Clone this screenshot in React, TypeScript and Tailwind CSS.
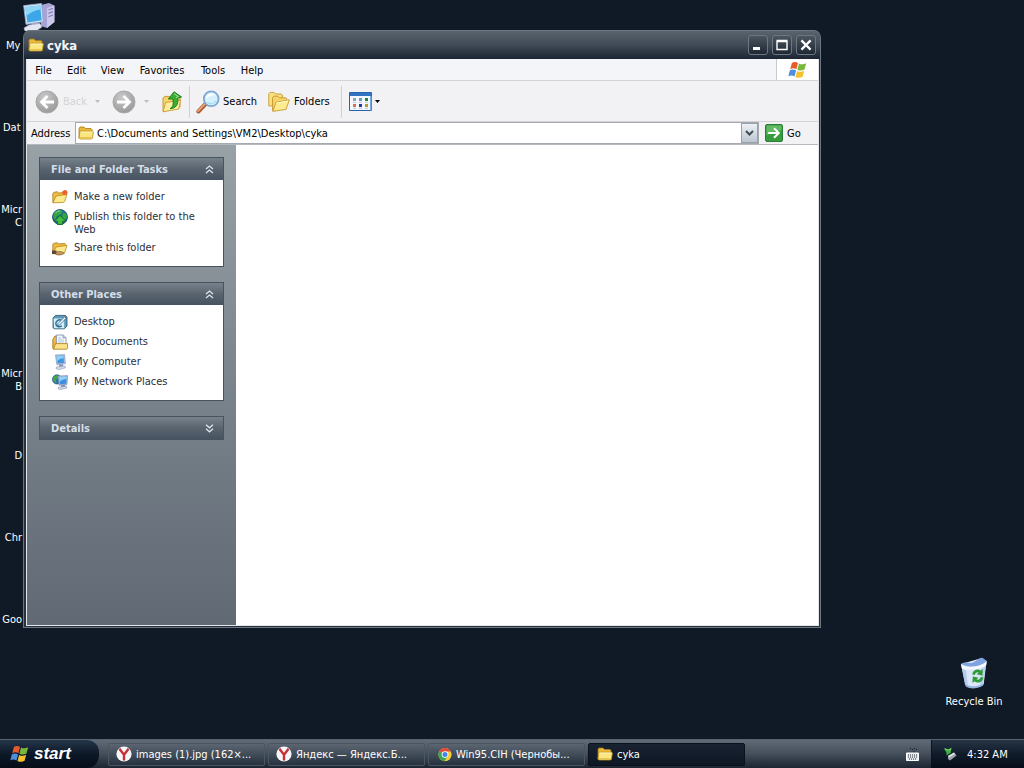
import React from 'react';

interface IconProps {
  className?: string;
}

interface DesktopShortcut {
  lines: string[];
  align: string;
}

interface TaskLink {
  label: string;
  icon: React.ReactNode;
}

const FolderIcon: React.FC<IconProps> = ({ className = 'w-4 h-4' }) => (
  <svg viewBox="0 0 16 16" className={className} aria-hidden="true">
    <path d="M1 13V3.5L2 2h4l1.5 1.5H13l1 1V7H4z" fill="#e9b93a" stroke="#a87a16" strokeWidth=".8" />
    <path d="M2 6.2h12.6l.8.8-1 6.2-.8.8H1.8l-.8-.8z" fill="#fbe681" stroke="#b98a1c" strokeWidth=".8" />
    <path d="M2.4 7h12" stroke="#fffac8" strokeWidth=".9" />
    <path d="M2 12.6h11.4" stroke="#e8c23f" strokeWidth="1" />
  </svg>
);

const OpenFolderIcon: React.FC<IconProps & { badge?: 'new' | 'share' }> = ({ className = 'w-4 h-4', badge }) => (
  <svg viewBox="0 0 16 16" className={className} aria-hidden="true">
    <path d="M.8 13.5V4.5l1-1.2 3.6-.5 1.4 1.2 6-.6.8 1V8z" fill="#eebc45" stroke="#a8771a" strokeWidth=".8" />
    <path d="M1 13.8 4 7l11-1.6-2.4 7.2-1 .8z" fill="#fde98e" stroke="#b98920" strokeWidth=".8" />
    {badge === 'new' && <path d="m12.4 1 2.4.4.8 2.2-1 2-2.4.6-1.8-1.4-.2-2.2z" fill="#e8622f" />}
    {badge === 'share' && (
      <g>
        <path d="M0 10.5h4.5V14H0z" fill="#5c4636" />
        <path d="M4 12.2c3-1.2 5-.6 7.4.2l1 .8c-2 2-6 2.2-8.6 1.2z" fill="#c89a5c" stroke="#6d4f2a" strokeWidth=".6" />
      </g>
    )}
  </svg>
);

const WindowsFlag: React.FC<IconProps> = ({ className }) => (
  <svg viewBox="0 0 20 18" className={className} aria-hidden="true">
    <path d="M3.9 2C6 .5 8 .6 10 1.9L8.4 8.3C6.4 7 4.4 7 2.2 8.2z" fill="#e8592b" />
    <path d="M11 2.4c2.2 1.3 4.5 1.2 7.2-.2l-1.7 6.3c-2.4 1.3-4.8 1.4-7.1.2z" fill="#7ab83c" />
    <path d="M1.9 9.3c2.3-1.2 4.2-1.1 6.2.1l-1.6 6C4.4 14.2 2.6 14.3.3 15.3z" fill="#4d8fdd" />
    <path d="M9.1 9.9c2.3 1.2 4.6 1.1 7.1-.2l-1.6 6.1c-2.6 1.3-4.9 1.3-7.1.1z" fill="#f5c12e" />
  </svg>
);

const NavArrow: React.FC<{ forward?: boolean }> = ({ forward }) => (
  <svg viewBox="0 0 24 24" className="h-6 w-6 shrink-0" aria-hidden="true">
    <defs>
      <radialGradient id={forward ? 'navForward' : 'navBack'} cx=".4" cy=".3" r=".8">
        <stop offset="0" stopColor="#cacaca" />
        <stop offset="1" stopColor="#949494" />
      </radialGradient>
    </defs>
    <circle cx="12" cy="12" r="11" fill={forward ? 'url(#navForward)' : 'url(#navBack)'} stroke="#a9a9a9" />
    <path
      d={forward ? 'M5 12h12M11.5 6l6 6-6 6' : 'M19 12H7M12.5 6l-6 6 6 6'}
      fill="none"
      stroke="#fff"
      strokeWidth="2.8"
    />
  </svg>
);

const Caret: React.FC<IconProps> = ({ className = '' }) => (
  <svg viewBox="0 0 5 3" className={`h-[3px] w-[5px] shrink-0 ${className}`} aria-hidden="true">
    <path d="M0 0h5L2.5 3z" fill="currentColor" />
  </svg>
);

const UpFolderIcon: React.FC = () => (
  <svg viewBox="0 0 22 24" className="h-6 w-[22px]" aria-hidden="true">
    <path d="M2 21V8l2-1.6h4L10 8l7-1.4 2 1V17z" fill="#f5d56a" stroke="#c99a32" />
    <path d="M2 21.8 4.6 12.6 19.6 10l-1.8 9z" fill="#fdeea0" stroke="#cda23a" />
    <path
      d="M9 18.6c3-1.4 3.6-4 3-9.6H7.4L13 1.8 20.6 7l-3.8 1c.8 6.6-2 10.6-7.8 10.6z"
      fill="#3aae37"
      stroke="#17761b"
      strokeWidth=".9"
    />
    <path d="m13 3.6 4.4 3-2.4 1" fill="none" stroke="#a5e491" strokeWidth="1" />
  </svg>
);

const SearchIcon: React.FC = () => (
  <svg viewBox="0 0 24 24" className="h-6 w-6" aria-hidden="true">
    <path d="m10 13.5-7.6 8" stroke="#a75c32" strokeWidth="4" strokeLinecap="round" />
    <path d="m9.4 13.4-7.4 7.8" stroke="#eda572" strokeWidth="1.8" strokeLinecap="round" />
    <circle cx="15.2" cy="8.8" r="7.4" fill="#d6f1fc" stroke="#7ea7d4" strokeWidth="1.8" />
    <path d="M10.2 8.6c.2-3 2.4-5 5.4-5 2 0 3.3.8 4 1.8-3.6-.8-6.6.4-9.4 3.2z" fill="#fff" />
    <path d="M11.4 12.2c2.6 2.4 6.4 1.8 8.4-1.4" fill="none" stroke="#a9dcf5" strokeWidth="1.4" />
  </svg>
);

const FoldersIcon: React.FC = () => (
  <svg viewBox="0 0 22 22" className="h-[22px] w-[22px]" aria-hidden="true">
    <path d="M.8 15V2.6L2 1.4h4L7.4 3H13l1.4 1v10.4z" fill="#f9e07f" stroke="#cda33c" />
    <path d="M4.6 19.4V6.6l1.2-1.4h4l1.6 1.6h6.4l1 1v4z" fill="#f6d66c" stroke="#c79a32" />
    <path d="M4.8 20.4 8 11.2l13.4-2.4-3.4 9.6z" fill="#fdeb90" stroke="#cea238" />
    <path d="M8.6 12 20 10" stroke="#fffbd2" />
  </svg>
);

const ViewsIcon: React.FC = () => (
  <svg viewBox="0 0 23 19" className="h-[19px] w-[23px]" aria-hidden="true">
    <path d="M.5.5h22v18H.5z" fill="#f4f8fc" stroke="#2862a8" />
    <path d="M1 1h21v3H1z" fill="#3373c4" />
    <path d="M21 4h1.5v14.5H21z" fill="#78aae0" />
    <path d="M4 6h3v3H4z" fill="#93a5b8" />
    <path d="M10 6h3v3h-3z" fill="#6d99bd" />
    <path d="M16 6h3v3h-3z" fill="#22863c" />
    <path d="M4 12h3v3H4z" fill="#db7244" />
    <path d="M10 12h3v3h-3z" fill="#1c3fa8" />
    <path d="M16 12h3v3h-3z" fill="#b89a2c" />
    <path d="M4 10.4h3M10 10.4h3M16 10.4h3M4 16.4h3M10 16.4h3M16 16.4h3" stroke="#b4bcc6" strokeWidth=".8" />
  </svg>
);

const GoIcon: React.FC = () => (
  <svg viewBox="0 0 18 18" className="h-[18px] w-[18px]" aria-hidden="true">
    <rect x=".5" y=".5" width="17" height="17" rx="1.5" fill="#379c3c" stroke="#2a7d34" />
    <path d="M1.5 1.5h15v5c-6 0-10 2-15 5z" fill="#61b964" />
    <path d="M3.2 9h10.4M9 4.2 13.8 9 9 13.8" fill="none" stroke="#fff" strokeWidth="2" />
  </svg>
);

const GlobeIcon: React.FC = () => (
  <svg viewBox="0 0 16 16" className="h-4 w-4" aria-hidden="true">
    <circle cx="8" cy="8" r="7.5" fill="#1f67a8" stroke="#17486f" strokeWidth=".8" />
    <path d="M2 4.4C4.6.8 9 .4 10.6 2L9 5.6 5 7 3 11C1 9 1 6.6 2 4.4zM11 3.4l3.4 1.4.6 4-3 2.6-2-4z" fill="#35a53e" />
    <path d="m8 6.4 6 6h-3.4v3H5.4v-3H2z" fill="#42bb3f" stroke="#12601d" strokeWidth=".8" />
    <path d="M3.4 4.2C4.6 2.4 6.6 1.8 8 2" fill="none" stroke="#a3dcc4" strokeWidth=".9" />
  </svg>
);

const DesktopIcon: React.FC = () => (
  <svg viewBox="0 0 16 16" className="h-4 w-4" aria-hidden="true">
    <path d="M1 4 3.4 1.4h10L15 3v9l-2.6 2.8H2L1 13.4z" fill="#5c9ab8" stroke="#1d526f" strokeWidth=".8" />
    <path d="M1.6 4.4h10.6v9.8H2z" fill="#d4eef8" />
    <path d="M9.6 6.2C7 4.8 3.8 6.8 3.8 9.6c0 3 3.4 4 6 2.2" fill="none" stroke="#286f95" strokeWidth="1.4" />
    <path d="m6 9.6 6.8-7 1.6 1.4-6.8 7-2.2.6z" fill="#f2fbff" stroke="#275f83" strokeWidth=".8" />
    <path d="m12.6 2.6 1.6 1.4" stroke="#cc4d36" strokeWidth="1" />
  </svg>
);

const DocumentsIcon: React.FC = () => (
  <svg viewBox="0 0 16 16" className="h-4 w-4" aria-hidden="true">
    <path d="M.8 14.4V5.4L3 2h2.4v12.8H1.4z" fill="#ecb944" stroke="#9e7018" strokeWidth=".8" />
    <path d="M4.4 1h6.8L14 3.6V12H4.4z" fill="#f4f9fe" stroke="#7c8ba4" strokeWidth=".8" />
    <path d="M11 1v2.8h3" fill="#c8dcf1" stroke="#7c8ba4" strokeWidth=".8" />
    <path d="M6 4h3.4M6 6h6M6 8h6" stroke="#9cb6d6" strokeWidth=".8" />
    <path d="M3.6 9.6h12v4.8l-.8.8H1.4z" fill="#fbe28a" stroke="#aa7b1c" strokeWidth=".8" />
  </svg>
);

const ComputerIcon: React.FC = () => (
  <svg viewBox="0 0 16 16" className="h-4 w-4" aria-hidden="true">
    <path d="m3.4 1 9.2-.4.8 9.2-8.6.8z" fill="#a9bcda" stroke="#8094b8" strokeWidth=".6" />
    <path d="m4.4 2 7-.3.6 7-6.4.6z" fill="#3e97e2" />
    <path d="m4.4 2 7-.3.2 2.6c-3 0-5 1.4-6.8 3z" fill="#8bd0f7" />
    <path d="m7 10.6 3.8-.4.6 2.2-4.4.6z" fill="#8795b6" />
    <path d="m4.4 13 8.4-1 .8 1.8-6.4 1.8-3-.8z" fill="#d4daea" stroke="#8c99b6" strokeWidth=".6" />
  </svg>
);

const NetworkIcon: React.FC = () => (
  <svg viewBox="0 0 16 16" className="h-4 w-4" aria-hidden="true">
    <circle cx="5" cy="5.4" r="4.6" fill="#2b72ba" stroke="#194978" strokeWidth=".6" />
    <path d="M1 4.4C2 1.8 4.6.8 6.8 1.4L6 4.4 3.6 5.6 4.4 9C2 8.6.6 6.4 1 4.4z" fill="#45aa3d" />
    <path d="m6 2 9.6-.4-.6 9-8 .6z" fill="#a9bcda" stroke="#7086b2" strokeWidth=".6" />
    <path d="m7 3 7.6-.3-.5 7-6.2.5z" fill="#3e8fdd" />
    <path d="m7 3 7.6-.3-.1 2.4c-3 0-5 1-7 2.8z" fill="#8fd4f8" />
    <path d="m9 11.2 4-.4.4 1.8-4 .6z" fill="#7887ad" />
    <path d="m6.4 13.2 7.8-.9.8 1.5-6.4 1.8-2.4-.8z" fill="#d4daea" stroke="#8390b0" strokeWidth=".6" />
  </svg>
);

const MyComputerLarge: React.FC = () => (
  <svg viewBox="0 0 32 28" className="h-7 w-8" aria-hidden="true">
    <path d="m18 2 8-2 5.4 2.4V19L24 25l-6-2z" fill="#a7a3d4" />
    <path d="m24 5 7.4-2.6V19L24 25z" fill="#cbc8ec" />
    <path d="m25.4 7 4.6-1.8M25.4 10.4 30 8.6M25.4 13.8 30 12" stroke="#8680b8" strokeWidth="1.2" />
    <path d="M.6 2.6 18.6.4l1.6 18.4L3 21.4z" fill="#d0e2f5" stroke="#8aa7ce" strokeWidth=".8" />
    <path d="m2.4 4.2 14.8-1.8L18.6 17.2 4.4 19.4z" fill="#3da6e8" />
    <path d="m2.4 4.2 14.8-1.8.4 4C12 7 7 9.4 3.4 13z" fill="#8cd6f8" />
    <path d="m9 20 6-1 1.6 4H8z" fill="#a5a9c8" />
    <path d="m1 25 5-3 11-1.6L19 24l-6 4H2z" fill="#e4e6f2" stroke="#a5abc9" strokeWidth=".7" />
  </svg>
);

const RecycleBinIcon: React.FC = () => (
  <svg viewBox="0 0 30 32" className="h-8 w-[30px]" aria-hidden="true">
    <path d="M2 7 23 1l4.6 3-3 23.6c-4 3.6-12 4.4-18 1z" fill="#dbe7f8" />
    <path d="M2 7c5-3 8 0 12-1.6 4-1.8 6-4.8 9.4-4.6l4.4 3.4C24 9 11 12 2 7z" fill="#7fa4e0" />
    <path d="M2 7c5 4.4 18 4 25.8-2.8l-.6 4C20 12.8 8 14 2.8 11.4z" fill="#f5f9ff" />
    <path d="m3 12 3 15.6 3 1.6-2-16z" fill="#b5cbee" />
    <path d="m22 12 4.6-2.6L24.4 27l-3.6 2z" fill="#bcd0ef" />
    <path d="M7 27.6c5 2.4 12 2.6 17-1v2c-5 3.6-13 3.6-17.4.6z" fill="#97b3e0" />
    <path d="M14.4 17.6c1-3.6 4.6-4.6 7-2.6" fill="none" stroke="#2c9a35" strokeWidth="2.8" />
    <path d="m23.8 12-.4 6.4-5.8-1.2z" fill="#2c9a35" />
    <path d="M23.2 20.4c-1 3.6-4.6 4.6-7 2.8" fill="none" stroke="#2c9a35" strokeWidth="2.8" />
    <path d="m13.4 26 .4-6.6 5.8 1.4z" fill="#2c9a35" />
  </svg>
);

const YandexIcon: React.FC = () => (
  <svg viewBox="0 0 16 16" className="h-4 w-4 shrink-0" aria-hidden="true">
    <circle cx="8" cy="8" r="7.6" fill="#f6f6f8" />
    <path d="m3.4 2.8 4.6 6 4.6-6M8 8v6.6" fill="none" stroke="#c9313a" strokeWidth="2.4" />
  </svg>
);

const ChromeIcon: React.FC = () => (
  <svg viewBox="0 0 16 16" className="h-4 w-4 shrink-0" aria-hidden="true">
    <circle cx="9" cy="8.6" r="6.6" fill="#f7ca3d" />
    <path d="M9 8.6 3.3 5.2A6.6 6.6 0 0 1 14.8 5.4H9z" fill="#e04a3c" />
    <path d="M9 8.6 3.3 5.2A6.6 6.6 0 0 0 8.4 15.2L11.8 10z" fill="#3fa556" />
    <circle cx="9" cy="8.6" r="3.3" fill="#fff" />
    <circle cx="9" cy="8.6" r="2.5" fill="#4284ee" />
  </svg>
);

const KeyboardIcon: React.FC = () => (
  <svg viewBox="0 0 13 13" className="h-[13px] w-[13px]" aria-hidden="true">
    <path d="M4 .5h1M6 1.5h1M8 .5h1M10 1.5h1M8 3v2" stroke="#141c27" />
    <path d="M.5 5h12v7.5H.5z" fill="#e8ebee" stroke="#fff" />
    <path d="M2 7h9M2 9h9M3 11h7" stroke="#232c38" strokeDasharray="1 1" />
  </svg>
);

const SafelyRemoveIcon: React.FC = () => (
  <svg viewBox="0 0 14 14" className="h-[14px] w-[14px]" aria-hidden="true">
    <path d="m5 9 6-3.4 2.6 3L7 13.4 5 12z" fill="#9ba2a8" />
    <path d="m5 9 6-3.4 1 1.4-6 3.6z" fill="#dfe3e6" />
    <path d="M.6 1 5 2.4 8.6.6 7.8 5.8 3.6 8.6 3.4 5.4z" fill="#3fae3c" />
    <path d="m2 1.8 3.2 1.4L8 2" fill="none" stroke="#8fe07f" strokeWidth=".9" />
  </svg>
);

const Chevrons: React.FC<{ down?: boolean }> = ({ down }) => (
  <svg viewBox="0 0 9 9" className="h-[9px] w-[9px]" aria-hidden="true">
    <path
      d={down ? 'm1 .8 3.5 3L8 .8M1 4.8l3.5 3 3.5-3' : 'm1 4 3.5-3L8 4M1 8l3.5-3L8 8'}
      fill="none"
      stroke="#dce4ed"
      strokeWidth="1.3"
    />
  </svg>
);

const shortcuts: DesktopShortcut[] = [
  { lines: ['My'], align: 'items-start pl-[6px]' },
  { lines: ['Dat'], align: 'items-start pl-[3px]' },
  { lines: ['Micr', 'C'], align: 'items-end' },
  { lines: [], align: '' },
  { lines: ['Micr', 'B'], align: 'items-end' },
  { lines: ['D'], align: 'items-end' },
  { lines: ['Chr'], align: 'items-end' },
  { lines: ['Goo'], align: 'items-end' },
];

const menus = [
  { label: 'File', width: 'w-[33px]' },
  { label: 'Edit', width: 'w-[33px]' },
  { label: 'View', width: 'w-[39px]' },
  { label: 'Favorites', width: 'w-[60px]' },
  { label: 'Tools', width: 'w-[42px]' },
  { label: 'Help', width: 'w-[36px]' },
];

const folderTasks: TaskLink[] = [
  { label: 'Make a new folder', icon: <OpenFolderIcon badge="new" /> },
  { label: 'Publish this folder to the Web', icon: <GlobeIcon /> },
  { label: 'Share this folder', icon: <OpenFolderIcon badge="share" /> },
];

const otherPlaces: TaskLink[] = [
  { label: 'Desktop', icon: <DesktopIcon /> },
  { label: 'My Documents', icon: <DocumentsIcon /> },
  { label: 'My Computer', icon: <ComputerIcon /> },
  { label: 'My Network Places', icon: <NetworkIcon /> },
];

const taskButtons = [
  { label: 'images (1).jpg (162×...', icon: <YandexIcon /> },
  { label: 'Яндекс — Яндекс.Б...', icon: <YandexIcon /> },
  { label: 'Win95.CIH (Чернобы...', icon: <ChromeIcon /> },
];

const TaskPanel: React.FC<{ title: string; links?: TaskLink[] }> = ({ title, links }) => (
  <section className="border border-[#485360]">
    <button className="flex h-[22px] w-full items-center justify-between bg-linear-to-b from-[#78828d] via-[#59646f] to-[#485362] pt-px pr-[9px] pl-[11px] text-[11px] font-bold text-[#d5dde8]">
      {title}
      <Chevrons down={!links} />
    </button>
    {links && (
      <ul className="flex flex-col gap-1 bg-white px-3 pt-[9px] pb-[10px]">
        {links.map((link) => (
          <li key={link.label}>
            <a href="#" className="flex min-h-4 gap-[6px] text-[#2b2e38]">
              <span className="h-4 w-4 shrink-0">{link.icon}</span>
              <span className="w-[130px] pt-px leading-[13px]">{link.label}</span>
            </a>
          </li>
        ))}
      </ul>
    )}
  </section>
);

const TitleBar: React.FC = () => {
  const buttonClass =
    'flex h-5 w-5 items-center justify-center rounded-[3px] border border-[#6d7781] bg-linear-to-b from-[#4c5661] to-[#1f2935]';

  return (
    <header className="flex h-[29px] items-center rounded-t-md border-t border-[#6c7580] bg-linear-to-b from-[#59636d] via-[#414b57] to-[#1b2533] px-1">
      <FolderIcon className="h-4 w-4" />
      <h1 className="ml-[3px] flex-1 pt-px text-[13px] font-bold text-[#f0f6ff]">cyka</h1>
      <div className="flex gap-1">
        <button className={buttonClass} aria-label="Minimize">
          <svg viewBox="0 0 12 12" className="h-3 w-3"><path d="M1 8h7v3H1z" fill="#fff" /></svg>
        </button>
        <button className={buttonClass} aria-label="Maximize">
          <svg viewBox="0 0 12 12" className="h-3 w-3"><path d="M1 2.5h10v8H1zM.5 1.5h11" fill="none" stroke="#fff" strokeWidth="1.4" /></svg>
        </button>
        <button className={buttonClass} aria-label="Close">
          <svg viewBox="0 0 12 12" className="h-3 w-3"><path d="m1.4 1.4 9.2 9.2m0-9.2-9.2 9.2" stroke="#fff" strokeWidth="2.2" /></svg>
        </button>
      </div>
    </header>
  );
};

const ExplorerWindow: React.FC = () => (
  <main className="absolute top-[30px] left-[23px] flex h-[598px] w-[798px] flex-col rounded-t-lg border-x border-b border-[#6c7580] bg-[#28323e]">
    <TitleBar />
    <div className="mr-px mb-px ml-[2px] flex flex-1 flex-col border border-t-0 border-[#e4e7ea] bg-[#f2f2f5]">
      <nav className="flex h-[22px] border-b border-[#d3d3d8]">
        <div className="flex flex-1 items-center border-r border-[#c9c9ce] bg-[#f4f5f9] pt-px">
          {menus.map((menu) => (
            <button key={menu.label} className={`${menu.width} shrink-0 text-center`}>
              {menu.label}
            </button>
          ))}
        </div>
        <div className="flex w-[41px] items-center justify-center bg-white">
          <WindowsFlag className="h-[18px] w-5" />
        </div>
      </nav>

      <div className="flex h-[41px] items-center border-b border-[#d3d3d8] pt-px pl-2">
        <button className="flex items-center gap-1 text-[#d2d2d6]" disabled>
          <NavArrow />
          <span className="w-7 text-left">Back</span>
          <Caret className="text-[#bcbcc0]" />
        </button>
        <button className="ml-3 flex items-center gap-2 text-[#bcbcc0]" aria-label="Forward" disabled>
          <NavArrow forward />
          <Caret />
        </button>
        <button className="ml-3" aria-label="Up">
          <UpFolderIcon />
        </button>
        <span className="mx-[6px] h-8 w-px bg-[#cfcfd4]" />
        <button className="flex w-[66px] items-center gap-[3px]">
          <SearchIcon />
          Search
        </button>
        <button className="ml-[6px] flex w-[66px] items-center gap-1">
          <FoldersIcon />
          Folders
        </button>
        <span className="mx-[7px] h-8 w-px bg-[#cfcfd4]" />
        <button className="flex items-center gap-[3px]" aria-label="Views">
          <ViewsIcon />
          <Caret />
        </button>
      </div>

      <form className="flex h-[23px] items-center border-b border-[#b5b8bd] pl-1" onSubmit={(e) => e.preventDefault()}>
        <label htmlFor="address" className="w-11 whitespace-nowrap">Address</label>
        <div className="flex h-[22px] flex-1 items-center border border-[#a5a9b0] bg-white pl-[2px]">
          <FolderIcon className="h-4 w-4 shrink-0" />
          <input
            id="address"
            type="text"
            defaultValue="C:\Documents and Settings\VM2\Desktop\cyka"
            className="h-5 min-w-0 flex-1 bg-transparent pt-px pl-[3px] outline-none"
          />
          <button
            type="button"
            aria-label="Address history"
            className="flex h-5 w-[17px] items-center justify-center border border-[#98a2af] bg-linear-to-b from-[#eef1f5] to-[#bcc5d0]"
          >
            <svg viewBox="0 0 9 6" className="h-[6px] w-[9px]">
              <path d="m1 1 3.5 3.5L8 1" fill="none" stroke="#414b57" strokeWidth="2" />
            </svg>
          </button>
        </div>
        <button className="ml-[6px] flex w-[53px] items-center gap-1">
          <GoIcon />
          Go
        </button>
      </form>

      <div className="flex flex-1 bg-white">
        <aside className="flex w-[209px] flex-col gap-[15px] bg-linear-to-b from-[#98a1a5] via-[#7a848c] to-[#606974] px-3 pt-3">
          <TaskPanel title="File and Folder Tasks" links={folderTasks} />
          <TaskPanel title="Other Places" links={otherPlaces} />
          <TaskPanel title="Details" />
        </aside>
      </div>
    </div>
  </main>
);

const Taskbar: React.FC = () => (
  <footer className="flex h-[29px] items-stretch border-t border-[#59636e] bg-linear-to-b from-[#606b76] via-[#434e5a] to-[#1c2633] text-white">
    <button className="flex w-[99px] items-center gap-1 rounded-r-xl bg-linear-to-b from-[#25364a] via-[#0d1828] to-[#060d18] pl-[10px] font-['Liberation_Sans',sans-serif] text-[17px] leading-5 font-bold italic">
      <WindowsFlag className="h-[18px] w-5" />
      start
    </button>
    <div className="flex flex-1 items-center gap-[3px] pl-[9px]">
      {taskButtons.map((task) => (
        <button
          key={task.label}
          className="flex h-[23px] w-[157px] items-center gap-1 rounded-[2px] border border-[#4b5662] bg-linear-to-b from-[#5b6671] via-[#414c59] to-[#273240] pl-[7px] whitespace-nowrap"
        >
          {task.icon}
          {task.label}
        </button>
      ))}
      <button className="flex h-[23px] w-[157px] items-center gap-1 rounded-[2px] border border-[#0a111c] bg-linear-to-b from-[#182230] to-[#0e1724] pl-2">
        <FolderIcon />
        cyka
      </button>
    </div>
    <button className="mr-3" aria-label="Language bar">
      <KeyboardIcon />
    </button>
    <div className="flex w-[93px] items-center gap-[10px] border-l border-[#0b121d] bg-linear-to-b from-[#263545] via-[#101b2a] to-[#060d18] pl-[11px]">
      <SafelyRemoveIcon />
      <time>4:32 AM</time>
    </div>
  </footer>
);

const App: React.FC = () => (
  <div className="flex min-h-screen flex-col bg-[#101a26] font-['DejaVu_Sans_Condensed','Noto_Sans',sans-serif] text-[11px] leading-[13px] text-black">
    <div className="relative flex-1 overflow-hidden">
      <div className="absolute top-[3px] left-[23px]">
        <MyComputerLarge />
      </div>
      <ul className="absolute top-[39px] left-0 w-[22px] text-white">
        {shortcuts.map((shortcut, index) => (
          <li key={index} className={`flex h-[82px] flex-col ${shortcut.align}`}>
            {shortcut.lines.map((line) => (
              <span key={line}>{line}</span>
            ))}
          </li>
        ))}
      </ul>
      <ExplorerWindow />
      <button className="absolute right-[10px] bottom-[31px] flex w-20 flex-col items-center gap-[6px] whitespace-nowrap text-white">
        <RecycleBinIcon />
        Recycle Bin
      </button>
    </div>
    <Taskbar />
  </div>
);

export default App;
